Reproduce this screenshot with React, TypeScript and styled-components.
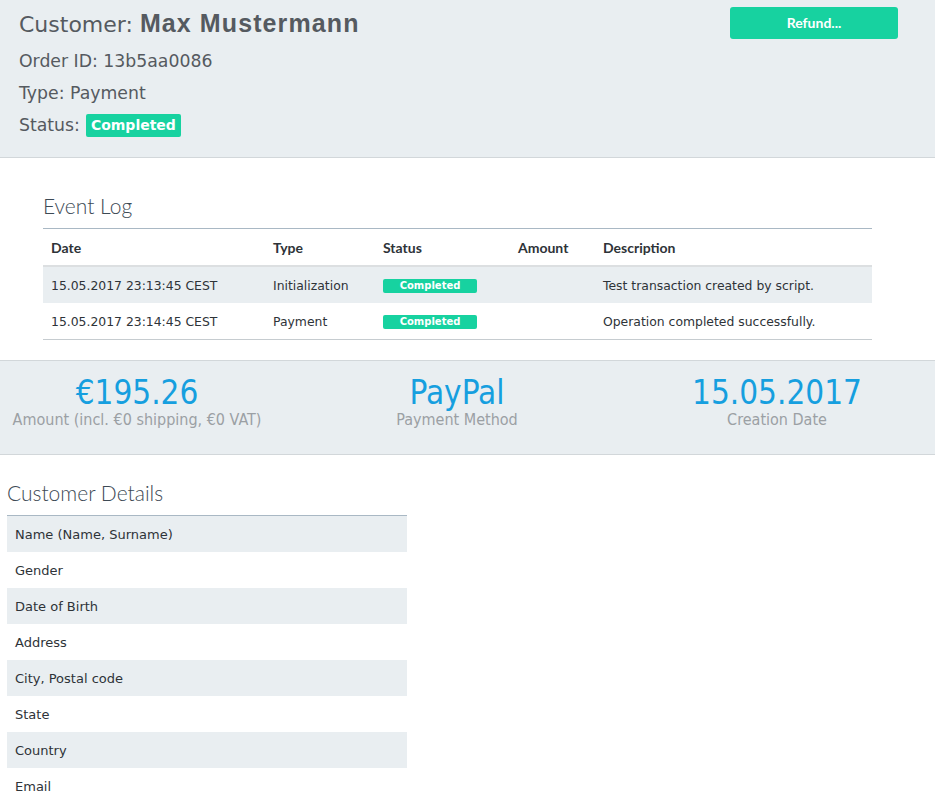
import React from "react";
import styled, { createGlobalStyle } from "styled-components";

const GlobalStyle = createGlobalStyle`
  html, body {
    margin: 0;
    padding: 0;
    background: #ffffff;
    overflow: hidden;
  }
  body {
    font-family: "DejaVu Sans", "Liberation Sans", sans-serif;
    color: #3a3f45;
  }
`;

const GREEN = "#17d2a0";
const PANEL = "#e9eef1";

const Header = styled.header`
  display: flex;
  justify-content: space-between;
  background: ${PANEL};
  border-bottom: 1px solid #d2d7da;
  padding: 7px 37px 19px 19px;
  height: 131px;
`;

const HeaderInfo = styled.div`
  display: flex;
  flex-direction: column;
  gap: 8px;
  color: #555a60;
`;

const CustomerLine = styled.div`
  font-size: 22px;
  line-height: 32px;
`;

const CustomerName = styled.span`
  font-family: "Liberation Sans", Arial, sans-serif;
  font-weight: bold;
  font-size: 25px;
  letter-spacing: 1.1px;
`;

const InfoLine = styled.div`
  font-size: 17.3px;
  line-height: 24px;
  height: 24px;
  display: flex;
  align-items: center;
  gap: 6px;
  &:first-of-type {
    margin-top: -2px;
  }
`;

const Badge = styled.span<{ $small?: boolean }>`
  display: inline-flex;
  align-items: center;
  justify-content: center;
  background: ${GREEN};
  color: #fff;
  font-weight: bold;
  border-radius: 2px;
  font-size: ${(p) => (p.$small ? "10px" : "14px")};
  width: ${(p) => (p.$small ? "94px" : "95px")};
  height: ${(p) => (p.$small ? "14px" : "23px")};
`;

const RefundButton = styled.button`
  width: 168px;
  height: 32px;
  background: ${GREEN};
  border: none;
  border-radius: 3px;
  color: #fff;
  font-family: Lato, "Open Sans", sans-serif;
  font-weight: bold;
  font-size: 14px;
  padding-bottom: 2px;
  cursor: pointer;
`;

const Section = styled.section<{ $indent: number; $width: number; $top: number }>`
  padding-left: ${(p) => p.$indent}px;
  padding-top: ${(p) => p.$top}px;
  width: ${(p) => p.$width}px;
`;

const SectionTitle = styled.h2`
  margin: 0;
  font-family: Lato, "Open Sans", sans-serif;
  font-weight: 300;
  font-size: 21px;
  color: #3d4a55;
  line-height: 28px;
  padding-bottom: 8px;
`;

const Table = styled.table`
  width: 100%;
  border-collapse: collapse;
  border-top: 1px solid #a9b8c4;
  border-bottom: 1px solid #c6ccd0;
  font-size: 12.4px;
`;

const Th = styled.th`
  text-align: left;
  font-family: Lato, "Open Sans", sans-serif;
  font-weight: bold;
  font-size: 14px;
  color: #2e3338;
  height: 36px;
  padding: 0 8px;
  border-bottom: 2px solid #dcdfe1;
`;

const Tr = styled.tr<{ $shaded?: boolean }>`
  background: ${(p) => (p.$shaded ? PANEL : "#fff")};
`;

const Td = styled.td`
  height: 36px;
  padding: 0 8px;
  color: #2e3338;
  vertical-align: middle;
`;

const Summary = styled.div`
  margin-top: 20px;
  background: ${PANEL};
  border-top: 1px solid #d2d7da;
  border-bottom: 1px solid #d2d7da;
  height: 93px;
  display: grid;
  grid-template-columns: repeat(3, 320px);
  margin-left: -23px;
  width: 960px;
`;

const Stat = styled.div`
  display: flex;
  flex-direction: column;
  align-items: center;
  padding-top: 14px;
`;

const StatValue = styled.div`
  font-family: "DejaVu Sans Condensed", "Liberation Sans Narrow", sans-serif;
  font-size: 33px;
  line-height: 36px;
  color: #169fdf;
`;

const StatLabel = styled.div`
  font-family: "DejaVu Sans Condensed", "Liberation Sans Narrow", sans-serif;
  font-size: 16px;
  line-height: 17px;
  color: #9ba0a4;
`;

const DetailsTable = styled.table`
  width: 100%;
  border-collapse: collapse;
  border-top: 1px solid #a9b8c4;
  font-size: 13px;
`;

const events = [
  {
    date: "15.05.2017 23:13:45 CEST",
    type: "Initialization",
    desc: "Test transaction created by script.",
  },
  {
    date: "15.05.2017 23:14:45 CEST",
    type: "Payment",
    desc: "Operation completed successfully.",
  },
];

const details = [
  "Name (Name, Surname)",
  "Gender",
  "Date of Birth",
  "Address",
  "City, Postal code",
  "State",
  "Country",
  "Email",
];

export default function App() {
  return (
    <>
      <GlobalStyle />
      <Header>
        <HeaderInfo>
          <CustomerLine>
            Customer: <CustomerName>Max Mustermann</CustomerName>
          </CustomerLine>
          <InfoLine>Order ID: 13b5aa0086</InfoLine>
          <InfoLine>Type: Payment</InfoLine>
          <InfoLine>
            Status: <Badge>Completed</Badge>
          </InfoLine>
        </HeaderInfo>
        <RefundButton>Refund...</RefundButton>
      </Header>

      <Section $indent={43} $width={829} $top={34}>
        <SectionTitle>Event Log</SectionTitle>
        <Table>
          <colgroup>
            <col style={{ width: 222 }} />
            <col style={{ width: 110 }} />
            <col style={{ width: 135 }} />
            <col style={{ width: 85 }} />
            <col />
          </colgroup>
          <thead>
            <tr>
              <Th>Date</Th>
              <Th>Type</Th>
              <Th>Status</Th>
              <Th>Amount</Th>
              <Th>Description</Th>
            </tr>
          </thead>
          <tbody>
            {events.map((e, i) => (
              <Tr key={e.date} $shaded={i % 2 === 0}>
                <Td>{e.date}</Td>
                <Td>{e.type}</Td>
                <Td>
                  <Badge $small>Completed</Badge>
                </Td>
                <Td />
                <Td>{e.desc}</Td>
              </Tr>
            ))}
          </tbody>
        </Table>
      </Section>

      <Summary>
        <Stat>
          <StatValue>€195.26</StatValue>
          <StatLabel>Amount (incl. €0 shipping, €0 VAT)</StatLabel>
        </Stat>
        <Stat>
          <StatValue>PayPal</StatValue>
          <StatLabel>Payment Method</StatLabel>
        </Stat>
        <Stat>
          <StatValue>15.05.2017</StatValue>
          <StatLabel>Creation Date</StatLabel>
        </Stat>
      </Summary>

      <Section $indent={7} $width={400} $top={24}>
        <SectionTitle>Customer Details</SectionTitle>
        <DetailsTable>
          <tbody>
            {details.map((d, i) => (
              <Tr key={d} $shaded={i % 2 === 0}>
                <Td>{d}</Td>
              </Tr>
            ))}
          </tbody>
        </DetailsTable>
      </Section>
    </>
  );
}
